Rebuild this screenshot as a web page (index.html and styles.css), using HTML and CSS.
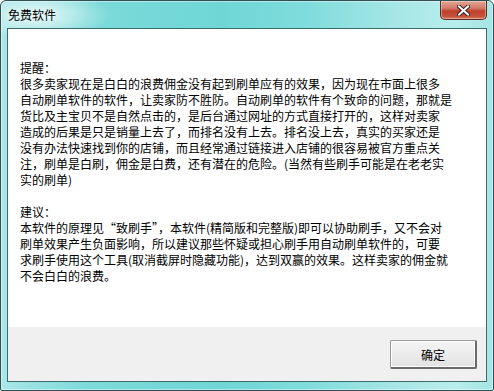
FILE: index.html
```html
<!DOCTYPE html>
<html lang="zh-CN">
  <head>
    <meta charset="UTF-8" />
    <title>免费软件</title>
    <link rel="stylesheet" href="styles.css">
  </head>
  <body>
    <div class="window">
      <div class="titlebar">
        <span class="title">免费软件</span>
        <button class="close-btn" title="关闭">
          <svg width="13" height="11" viewBox="0 0 13 11">
            <path d="M2 1.5 L11 9.5 M11 1.5 L2 9.5" stroke="#3a2020" stroke-width="4" stroke-linecap="square" fill="none" />
            <path d="M2 1.5 L11 9.5 M11 1.5 L2 9.5" stroke="#ffffff" stroke-width="2" stroke-linecap="square" fill="none" />
          </svg>
        </button>
      </div>

      <div class="client">
        <div class="content">
          提醒：<br>
          很多卖家现在是白白的浪费佣金没有起到刷单应有的效果，因为现在市面上很多<br>
          自动刷单软件的软件，让卖家防不胜防。自动刷单的软件有个致命的问题，那就是<br>
          货比及主宝贝不是自然点击的，是后台通过网址的方式直接打开的，这样对卖家<br>
          造成的后果是只是销量上去了，而排名没有上去。排名没上去，真实的买家还是<br>
          没有办法快速找到你的店铺，而且经常通过链接进入店铺的很容易被官方重点关<br>
          注，刷单是白刷，佣金是白费，还有潜在的危险。(当然有些刷手可能是在老老实<br>
          实的刷单)<br>
          <br>
          建议：<br>
          本软件的原理见“致刷手”，本软件(精简版和完整版)即可以协助刷手，又不会对<br>
          刷单效果产生负面影响，所以建议那些怀疑或担心刷手用自动刷单软件的，可要<br>
          求刷手使用这个工具(取消截屏时隐藏功能)，达到双赢的效果。这样卖家的佣金就<br>
          不会白白的浪费。
        </div>
        <div class="footer">
          <button class="ok-btn">确定</button>
        </div>
      </div>
    </div>
  </body>
</html>
```

FILE: styles.css
```css
html,
body {
  margin: 0;
  padding: 0;
  background-color: #ffffff;
}
body {
  font-family: "Noto Sans CJK SC", "Noto Sans", sans-serif;
  font-size: 12px;
  color: #000;
}
.window {
  width: 494px;
  height: 391px;
  box-sizing: border-box;
  border: 1px solid #2f4f50;
  border-radius: 6px 6px 2px 2px;
  padding: 0 6px 8px 6px;
  display: flex;
  flex-direction: column;
  background:
    radial-gradient(ellipse 70px 26px at 40px 14px, rgba(255, 255, 255, 0.75), rgba(255, 255, 255, 0) 100%),
    linear-gradient(to right, #a9e7e7 0%, #7cdada 18%, #6fd6d6 45%, #7fdcdc 62%, #a6e6e6 80%, #b8eded 92%, #a4e5e5 100%);
  box-shadow: inset 0 0 0 1px rgba(255, 255, 255, 0.45);
}
.titlebar {
  height: 27px;
  display: flex;
  align-items: flex-start;
  flex-shrink: 0;
}
.title {
  padding-left: 1px;
  margin-top: 6px;
  line-height: 16px;
  text-shadow: 0 0 6px rgba(255, 255, 255, 0.9);
}
.close-btn {
  margin-left: auto;
  width: 47px;
  height: 19px;
  padding: 0;
  border: 1px solid #5b2c25;
  border-top: none;
  border-radius: 0 0 5px 5px;
  background: linear-gradient(to bottom, #e3a496 0%, #d27a69 40%, #c0412c 55%, #c4513b 85%, #d67a63 100%);
  box-shadow: inset 0 0 0 1px rgba(255, 255, 255, 0.35);
  display: flex;
  align-items: center;
  justify-content: center;
}
.client {
  flex: 1;
  display: flex;
  flex-direction: column;
  border: 1px solid #3e6a6b;
  background-color: #f0f0f0;
}
.content {
  height: 298px;
  box-sizing: border-box;
  padding: 31px 0 0 12px;
  background-color: #ffffff;
  line-height: 16px;
  white-space: nowrap;
}
.footer {
  flex: 1;
  display: flex;
  justify-content: flex-end;
  align-items: flex-start;
  padding: 13px 9px 0 0;
}
.ok-btn {
  width: 87px;
  height: 29px;
  font-family: "Noto Sans CJK SC", "Noto Sans", sans-serif;
  font-size: 12px;
  color: #000;
  border: 1px solid #9a9a9a;
  border-right: 2px solid #6a6a6a;
  border-bottom: 2px solid #6a6a6a;
  border-radius: 2px;
  background: linear-gradient(to bottom, #f4f4f4 0%, #ececec 50%, #e2e2e2 100%);
  box-shadow: inset 0 0 0 1px #ffffff;
}
```
